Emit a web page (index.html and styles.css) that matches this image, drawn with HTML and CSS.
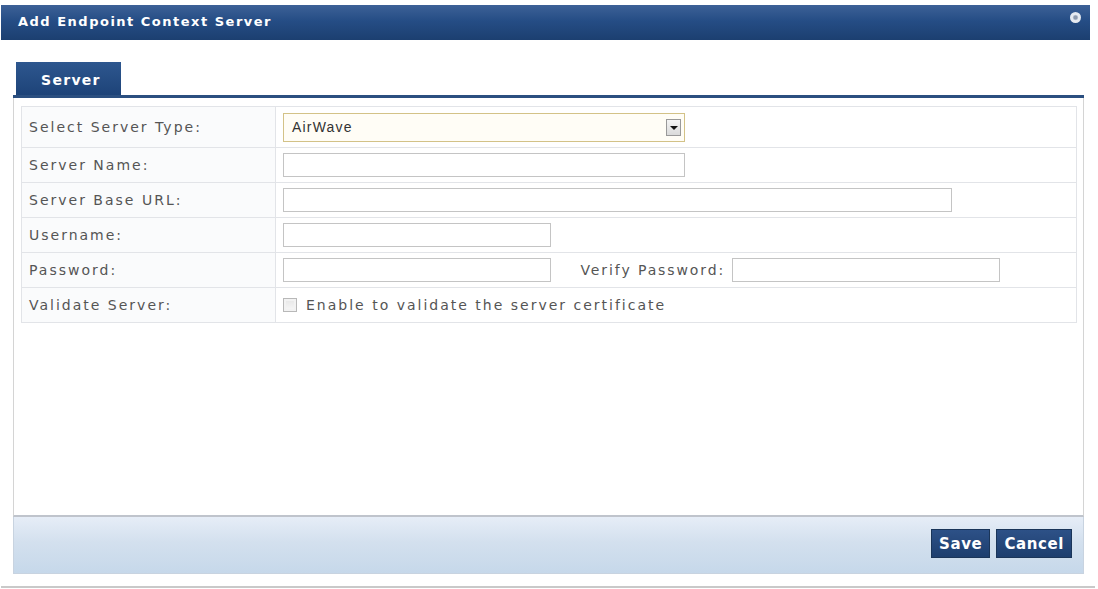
FILE: index.html
```html
<!DOCTYPE html>
<html lang="en">

<head>
    <meta charset="UTF-8">
    <title>Add Endpoint Context Server</title>
    <link rel="stylesheet" href="styles.css">
</head>

<body>
    <div class="dialog">
        <div class="title">
            <span>Add Endpoint Context Server</span>
            <span class="close"></span>
        </div>
        <div class="body">
            <div class="tabs">
                <div class="tab">Server</div>
            </div>
            <div class="panel">
                <table class="form">
                    <tr class="first">
                        <td class="label">Select Server Type:</td>
                        <td>
                            <div class="select">
                                <span>AirWave</span>
                                <span class="arrow"></span>
                            </div>
                        </td>
                    </tr>
                    <tr>
                        <td class="label">Server Name:</td>
                        <td><input type="text" class="w400"></td>
                    </tr>
                    <tr>
                        <td class="label">Server Base URL:</td>
                        <td><input type="text" class="w668"></td>
                    </tr>
                    <tr>
                        <td class="label">Username:</td>
                        <td><input type="text" class="w267"></td>
                    </tr>
                    <tr>
                        <td class="label">Password:</td>
                        <td>
                            <input type="text" class="w267">
                            <span class="verify">Verify Password:</span>
                            <input type="text" class="w267">
                        </td>
                    </tr>
                    <tr>
                        <td class="label">Validate Server:</td>
                        <td><label class="check"><span class="box"></span>Enable to validate the server certificate</label></td>
                    </tr>
                </table>
            </div>
            <div class="footer">
                <button class="btn">Save</button>
                <button class="btn">Cancel</button>
            </div>
        </div>
    </div>
</body>

</html>
```

FILE: styles.css
```css
* {
    margin: 0;
    padding: 0;
    box-sizing: border-box;
}

body {
    background: #fff;
    font-family: "DejaVu Sans", Verdana, sans-serif;
}

.dialog {
    width: 1094px;
    height: 588px;
    margin-left: 1px;
    padding-top: 5px;
    border-bottom: 2px solid #c9c9c9;
}

.title {
    width: 1089px;
    height: 35px;
    background: linear-gradient(#3d6197, #254d85 45%, #1c3f70);
    color: #fff;
    font-weight: bold;
    font-size: 13px;
    display: flex;
    align-items: center;
    justify-content: space-between;
    padding: 0 9px 2px 17px;
    letter-spacing: 1.5px;
}

.close {
    width: 11px;
    height: 11px;
    border-radius: 50%;
    background: radial-gradient(#8d9aae 20%, #e8ecf2 40%, #dfe4ec);
    margin-top: -8px;
}

.body {
    padding: 22px 11px 0 12px;
}

.tabs {
    height: 36px;
    display: flex;
    align-items: flex-end;
    border-bottom: 3px solid #2b4f80;
    padding-left: 3px;
}

.tab {
    width: 105px;
    height: 33px;
    background: linear-gradient(#2e578f, #1d4378);
    color: #fff;
    font-weight: bold;
    font-size: 14px;
    letter-spacing: 1.3px;
    padding: 10px 0 0 25px;
}

.panel {
    height: 419px;
    border: 1px solid #d4d4d4;
    border-top: none;
    border-bottom: 2px solid #bfc4cc;
    padding: 8px 6px 0 7px;
}

.form {
    width: 100%;
    border-collapse: collapse;
    font-size: 14px;
    letter-spacing: 2px;
    color: #555;
}

.form td {
    border: 1px solid #e2e4e8;
    height: 35px;
    padding: 0 0 0 7px;
}

.form .first td {
    height: 41px;
}

.form .label {
    width: 254px;
    background: #fafbfc;
}

.select {
    width: 402px;
    height: 29px;
    border: 1px solid #d3c287;
    background: #fffdf6;
    display: flex;
    align-items: center;
    justify-content: space-between;
    padding: 0 3px 0 8px;
    font-family: "Liberation Sans", Arial, sans-serif;
    letter-spacing: 1.2px;
    color: #333;
}

.arrow {
    width: 15px;
    height: 17px;
    border: 1px solid #999;
    background: linear-gradient(#f4f4f4, #dadada);
    position: relative;
}

.arrow::after {
    content: "";
    position: absolute;
    left: 3px;
    top: 6px;
    border-left: 4px solid transparent;
    border-right: 4px solid transparent;
    border-top: 4px solid #111;
}

input {
    height: 24px;
    border: 1px solid #c4c4c4;
    background: #fff;
    vertical-align: middle;
}

.w400 {
    width: 402px;
}

.w668 {
    width: 669px;
}

.w267 {
    width: 268px;
}

.verify {
    margin: 0 0 0 23px;
    letter-spacing: 1.9px;
    vertical-align: middle;
}

.check {
    display: flex;
    align-items: center;
}

.box {
    width: 14px;
    height: 14px;
    border: 1px solid #b8b8b8;
    background: linear-gradient(#e6e6e6, #f8f8f8);
    margin-right: 9px;
    box-shadow: inset 0 0 0 2px #f2f2f2;
}

.footer {
    height: 57px;
    border: 1px solid #c8d3e0;
    border-top: none;
    background: linear-gradient(#e6edf7, #d3e0ee 45%, #c6d8ea);
    display: flex;
    justify-content: flex-end;
    align-items: center;
    gap: 6px;
    padding: 0 11px 3px 0;
}

.btn {
    height: 29px;
    border: 1px solid #1a3559;
    background: linear-gradient(#2d5187, #1d3e6e);
    color: #fff;
    font-weight: bold;
    font-size: 15px;
    letter-spacing: 0.6px;
    font-family: "DejaVu Sans", Verdana, sans-serif;
    padding: 0 7px;
}
```
